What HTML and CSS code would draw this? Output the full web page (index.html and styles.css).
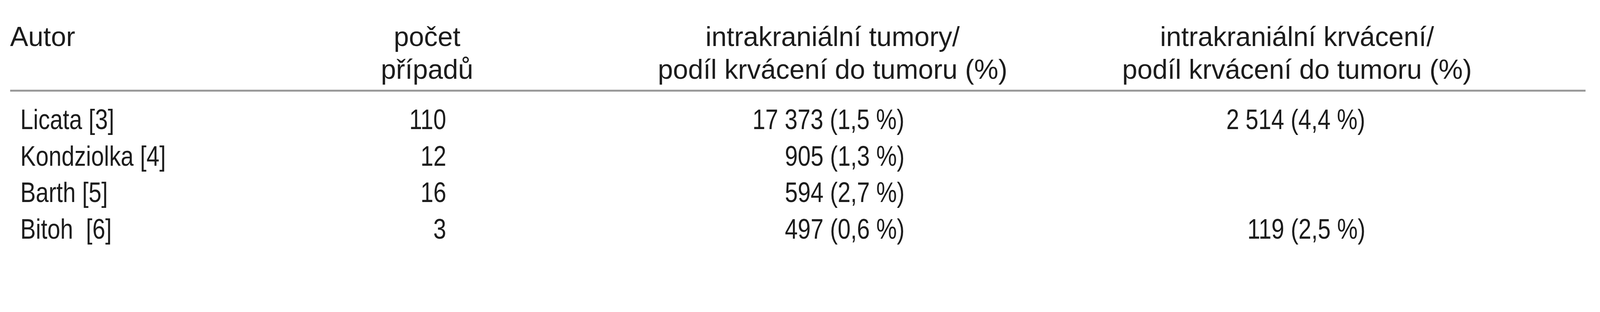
FILE: index.html
```html
<!DOCTYPE html>
<html lang="cs">
<head>
<meta charset="utf-8">
<title>Tabulka</title>
<link rel="stylesheet" href="styles.css">
</head>
<body>
<table class="data">
  <colgroup>
    <col class="c-author">
    <col class="c-count">
    <col class="c-tumor">
    <col class="c-bleed">
  </colgroup>
  <thead>
    <tr>
      <th class="h-author">Autor</th>
      <th class="h-count">počet<br>případů</th>
      <th class="h-tumor">intrakraniální tumory/<br>podíl krvácení do tumoru (%)</th>
      <th class="h-bleed">intrakraniální krvácení/<br>podíl krvácení do tumoru (%)</th>
    </tr>
  </thead>
  <tbody>
    <tr>
      <td class="d-author"><span class="txt">Licata [3]</span></td>
      <td class="d-count"><span class="txt">110</span></td>
      <td class="d-tumor"><span class="txt">17 373 (1,5 %)</span></td>
      <td class="d-bleed"><span class="txt">2 514 (4,4 %)</span></td>
    </tr>
    <tr>
      <td class="d-author"><span class="txt">Kondziolka [4]</span></td>
      <td class="d-count"><span class="txt">12</span></td>
      <td class="d-tumor"><span class="txt">905 (1,3 %)</span></td>
      <td class="d-bleed"></td>
    </tr>
    <tr>
      <td class="d-author"><span class="txt">Barth [5]</span></td>
      <td class="d-count"><span class="txt">16</span></td>
      <td class="d-tumor"><span class="txt">594 (2,7 %)</span></td>
      <td class="d-bleed"></td>
    </tr>
    <tr>
      <td class="d-author"><span class="txt">Bitoh&nbsp; [6]</span></td>
      <td class="d-count"><span class="txt">3</span></td>
      <td class="d-tumor"><span class="txt">497 (0,6 %)</span></td>
      <td class="d-bleed"><span class="txt">119 (2,5 %)</span></td>
    </tr>
  </tbody>
</table>
</body>
</html>
```
FILE: styles.css
```css
:root {
  /* one pixel of the 4758px-wide reference layout */
  --u: calc(100vw / 4758);
}

html, body {
  margin: 0;
  padding: 0;
  background: #ffffff;
  overflow: hidden;
}

body {
  padding-left: calc(30 * var(--u));
  color: #1c1c1c;
}

.data {
  border-collapse: separate;
  border-spacing: 0;
  table-layout: fixed;
  width: calc(4685 * var(--u));
}

.c-author { width: calc(1050 * var(--u)); }
.c-count  { width: calc(380 * var(--u)); }
.c-tumor  { width: calc(1840 * var(--u)); }
.c-bleed  { width: calc(1415 * var(--u)); }

.data th {
  font-family: "Liberation Sans", Arial, sans-serif;
  font-size: calc(81 * var(--u));
  font-weight: normal;
  line-height: calc(98 * var(--u));
  vertical-align: top;
  padding: calc(60 * var(--u)) 0 calc(11 * var(--u)) 0;
  border-bottom: calc(6 * var(--u)) solid #9a9a9a;
  text-align: center;
  white-space: nowrap;
}

.data th.h-author {
  text-align: left;
}

.data th.h-tumor {
  padding-left: calc(192 * var(--u));
}

.data th.h-bleed {
  padding-right: calc(301 * var(--u));
}

.data td {
  font-family: "Liberation Sans", Arial, sans-serif;
  font-size: calc(84 * var(--u));
  line-height: calc(109 * var(--u));
  padding: 0;
  white-space: nowrap;
  text-align: right;
}

.data .txt {
  display: inline-block;
  transform: scaleX(0.82);
  transform-origin: right center;
}

.data tbody tr:first-child td {
  padding-top: calc(29 * var(--u));
}

.data td.d-author {
  text-align: left;
  padding-left: calc(30 * var(--u));
}

.data td.d-author .txt {
  transform-origin: left center;
}

.data td.d-count { padding-right: calc(133 * var(--u)); }
.data td.d-tumor { padding-right: calc(610 * var(--u)); }
.data td.d-bleed { padding-right: calc(655 * var(--u)); }
```
